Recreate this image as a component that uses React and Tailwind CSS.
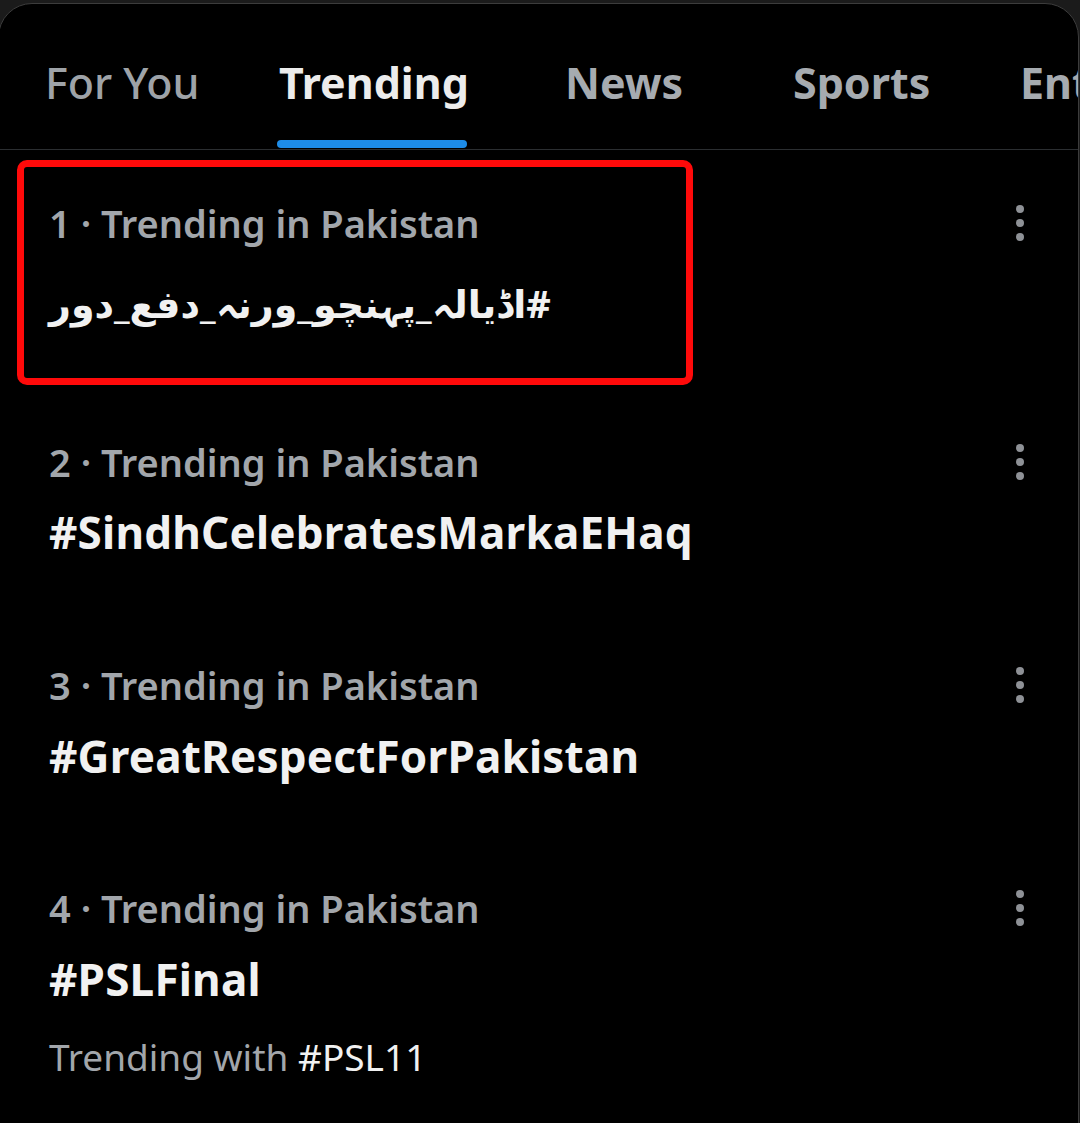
import React from "react";

const font = { fontFamily: '"Noto Sans", "Open Sans", "DejaVu Sans", sans-serif' };

function Dots() {
  return (
    <div className="flex flex-col items-center gap-[6px] shrink-0">
      <span className="block w-[8px] h-[8px] rounded-full bg-[#8e9196]" />
      <span className="block w-[8px] h-[8px] rounded-full bg-[#8e9196]" />
      <span className="block w-[8px] h-[8px] rounded-full bg-[#8e9196]" />
    </div>
  );
}

function Meta({ n }) {
  return (
    <div className="flex items-center justify-between h-[46px]">
      <div className="text-[38px] leading-[46px] font-semibold text-[#a2a6ab] tracking-[0px] whitespace-nowrap">
        {n} · Trending in Pakistan
      </div>
      <Dots />
    </div>
  );
}

function Title({ children }) {
  return (
    <div className="text-[44px] leading-[56px] font-bold text-[#f1f1f1] tracking-[0.2px] whitespace-nowrap">
      {children}
    </div>
  );
}

export default function App() {
  return (
    <div className="w-[1080px] h-[1123px] overflow-hidden bg-[#1b1b1b] pt-[3px]" style={font}>
      <div className="relative ml-[-2px] w-[1081px] h-[1160px] bg-black rounded-[34px] border border-[#3c3c3c] overflow-hidden">
        {/* Tabs */}
        <div className="flex h-[146px] pl-[46px] border-b border-[#2b2e31] overflow-hidden whitespace-nowrap">
          <div className="w-[234px] shrink-0 pt-[50px] text-[43px] leading-[58px] font-medium text-[#9ea3a8]">For You</div>
          <div className="w-[286px] shrink-0 flex flex-col justify-between">
            <div className="pt-[50px] text-[43px] leading-[58px] font-bold text-[#ececec]">Trending</div>
            <div className="ml-[-2px] w-[190px] h-[8px] mb-[1px] rounded-full bg-[#1d8ce8]" />
          </div>
          <div className="w-[228px] shrink-0 pt-[50px] text-[43px] leading-[58px] font-bold text-[#a6abb0]">News</div>
          <div className="w-[227px] shrink-0 pt-[50px] text-[43px] leading-[58px] font-bold text-[#a6abb0]">Sports</div>
          <div className="shrink-0 pt-[50px] text-[43px] leading-[58px] font-bold text-[#a6abb0]">Entertainment</div>
        </div>

        {/* List */}
        <div className="pl-[50px] pr-[54px]">
          <div className="pt-[50px]">
            <Meta n={1} />
            <div className="mt-[29px] flex h-[56px] items-center">
              <div dir="rtl" className="text-[38px] leading-[56px] font-bold text-[#f1f1f1] whitespace-nowrap">
                #اڈیالہ_پہنچو_ورنہ_دفع_دور
              </div>
            </div>
          </div>

          <div className="mt-[108px]">
            <Meta n={2} />
            <div className="mt-[19px]">
              <Title>#SindhCelebratesMarkaEHaq</Title>
            </div>
          </div>

          <div className="mt-[102px]">
            <Meta n={3} />
            <div className="mt-[20px]">
              <Title>#GreatRespectForPakistan</Title>
            </div>
          </div>

          <div className="mt-[101px]">
            <Meta n={4} />
            <div className="mt-[20px]">
              <Title>#PSLFinal</Title>
            </div>
            <div className="mt-[27px] text-[37px] leading-[46px] text-[#a2a6ab] whitespace-nowrap">
              Trending with <span className="text-[#f1f1f1]">#PSL11</span>
            </div>
          </div>
        </div>

        {/* Red annotation box */}
        <div className="absolute left-[18px] top-[156px] w-[676px] h-[225px] border-[7px] border-[#ff0a0a] rounded-[10px] pointer-events-none" />
      </div>
    </div>
  );
}
